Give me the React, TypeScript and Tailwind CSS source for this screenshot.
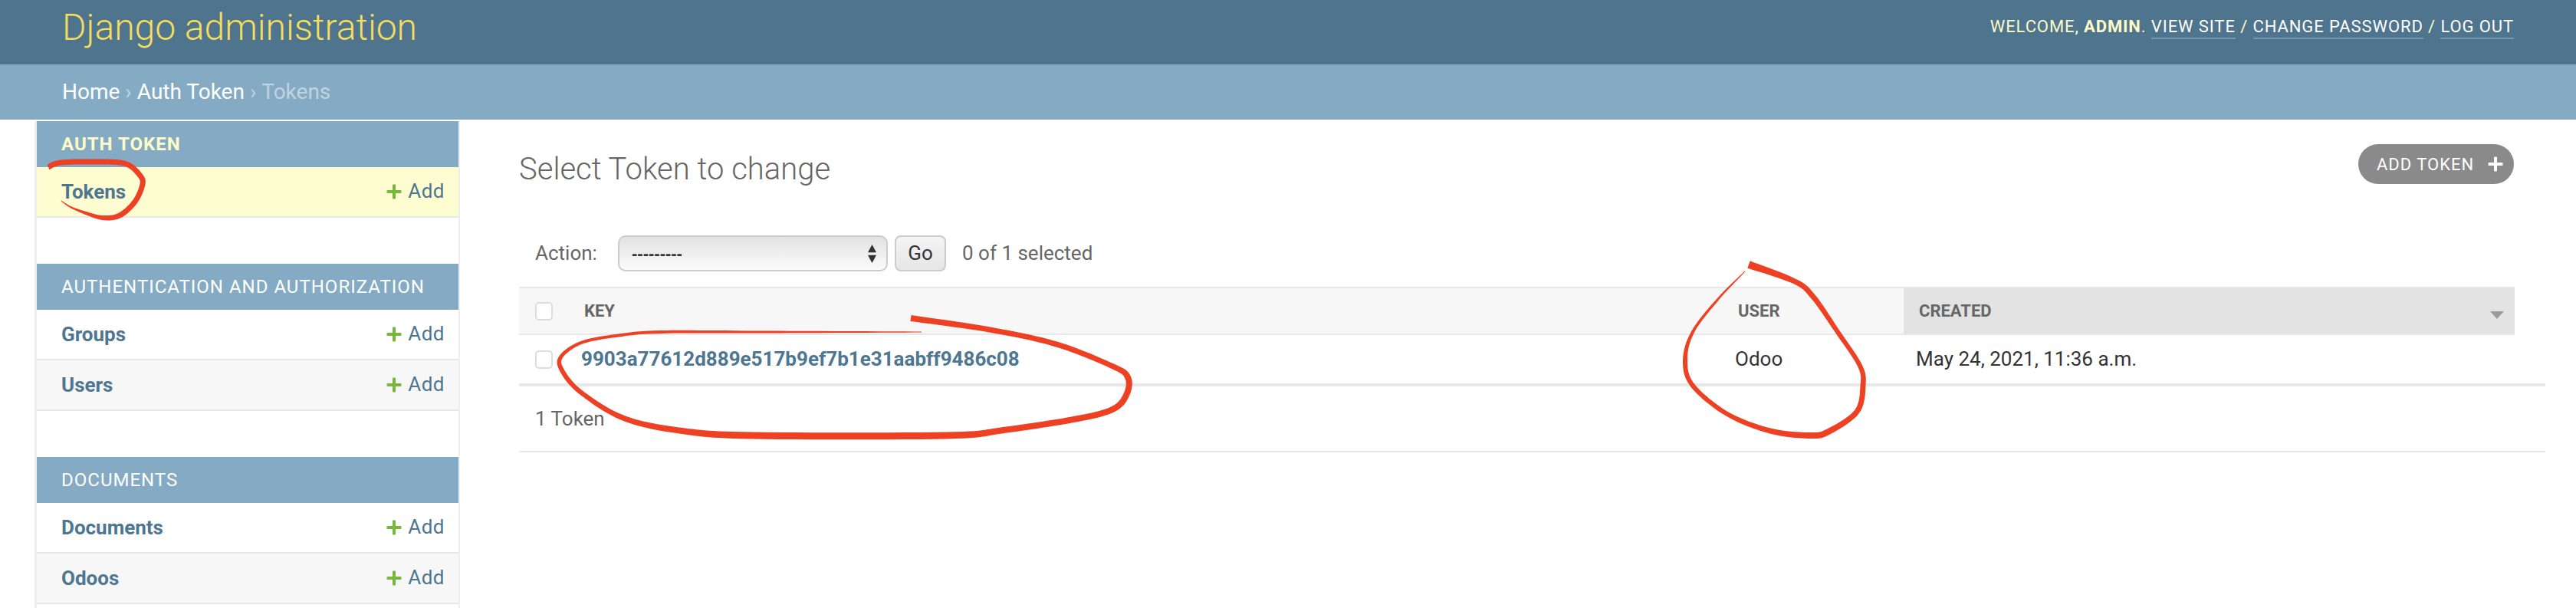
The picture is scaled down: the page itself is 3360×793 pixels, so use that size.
const blue = "text-[#4e7690]";

type Stroke = [number, number, number][];

// Hand-drawn red marks: centre line + pen width, turned into a filled outline
function brushPath(pts: Stroke) {
  const samples: [number, number, number][] = [];
  for (let i = 0; i < pts.length - 1; i++) {
    const p0 = pts[Math.max(i - 1, 0)];
    const p1 = pts[i];
    const p2 = pts[i + 1];
    const p3 = pts[Math.min(i + 2, pts.length - 1)];
    for (let s = 0; s < 12; s++) {
      const t = s / 12;
      const c = (k: number) =>
        0.5 *
        (2 * p1[k] +
          (p2[k] - p0[k]) * t +
          (2 * p0[k] - 5 * p1[k] + 4 * p2[k] - p3[k]) * t * t +
          (3 * p1[k] - p0[k] - 3 * p2[k] + p3[k]) * t * t * t);
      samples.push([c(0), c(1), p1[2] + (p2[2] - p1[2]) * t]);
    }
  }
  samples.push(pts[pts.length - 1]);
  const left: string[] = [];
  const right: string[] = [];
  samples.forEach((p, i) => {
    const a = samples[Math.max(i - 1, 0)];
    const b = samples[Math.min(i + 1, samples.length - 1)];
    const len = Math.hypot(b[0] - a[0], b[1] - a[1]) || 1;
    const nx = (-(b[1] - a[1]) / len) * (p[2] / 2);
    const ny = ((b[0] - a[0]) / len) * (p[2] / 2);
    left.push(`${(p[0] + nx).toFixed(1)} ${(p[1] + ny).toFixed(1)}`);
    right.unshift(`${(p[0] - nx).toFixed(1)} ${(p[1] - ny).toFixed(1)}`);
  });
  return `M${left.join("L")}L${right.join("L")}Z`;
}

const tokensMark: Stroke = [
  [63, 218, 7], [80, 212, 7], [134, 211, 7], [165, 214, 7], [182, 228, 7], [186, 240, 7],
  [176, 263, 7], [156, 281, 7], [134, 284, 6], [112, 278, 4], [92, 270, 2], [80, 262, 1],
];
const keyMark: Stroke = [
  [1188, 415, 8], [1291, 430, 7], [1378, 449, 7], [1452, 478, 7], [1471, 492, 8], [1470, 513, 8],
  [1453, 533, 8], [1406, 546, 8], [1309, 561, 8], [1234, 568, 9], [981, 568, 9], [890, 562, 8],
  [815, 546, 7], [758, 512, 6], [733, 483, 6], [732, 465, 5], [758, 447, 4], [803, 438, 4],
  [861, 433, 4], [1000, 433, 3], [1202, 433, 1],
];
const userMark: Stroke = [
  [2281, 345, 10], [2341, 367, 7], [2365, 387, 7], [2397, 433, 6], [2426, 477, 6], [2430, 503, 7],
  [2422, 537, 7], [2385, 563, 8], [2361, 568, 8], [2309, 562, 7], [2253, 540, 6], [2208, 503, 6],
  [2198, 470, 6], [2208, 433, 4], [2241, 390, 3], [2276, 354, 1],
];

function PlusIcon({ className }: { className: string }) {
  return (
    <svg viewBox="0 0 20 20" className={className}>
      <path
        fill="currentColor"
        d="M8 1.5a1 1 0 0 1 1-1h2a1 1 0 0 1 1 1V8h6.5a1 1 0 0 1 1 1v2a1 1 0 0 1-1 1H12v6.5a1 1 0 0 1-1 1H9a1 1 0 0 1-1-1V12H1.500a1 1 0 0 1-1-1V9a1 1 0 0 1 1-1H8z"
      />
    </svg>
  );
}

function ModelRow({ name, bg }: { name: string; bg: string }) {
  return (
    <div
      className={`flex h-[66px] items-center justify-between border-b-2 border-[#e8e8e8] pl-8 pr-[18px] text-[26px] ${blue} ${bg}`}
    >
      <span className="font-bold">{name}</span>
      <span className="flex items-center gap-[8px]">
        <PlusIcon className="h-5 w-5 text-[#76b73c]" />
        <span className="-mt-0.5 tracking-[0.5px]">Add</span>
      </span>
    </div>
  );
}

function Caption({ title, active }: { title: string; active?: boolean }) {
  return (
    <div
      className={`flex h-[60px] items-center bg-[#85abc4] pl-8 text-[24px] tracking-[1px] ${
        active ? "font-bold text-[#fdfbc8]" : "text-white"
      }`}
    >
      {title}
    </div>
  );
}

function Sidebar() {
  return (
    <div className="ml-[45px] mt-0.5 h-[635px] w-[555px] shrink-0 overflow-hidden border-l-[3px] border-r-2 border-[#eeeeee]">
      <Caption title="AUTH TOKEN" active />
      <ModelRow name="Tokens" bg="bg-[#fefdd2]" />
      <div className="mt-[60px]">
        <Caption title="AUTHENTICATION AND AUTHORIZATION" />
        <ModelRow name="Groups" bg="bg-white" />
        <ModelRow name="Users" bg="bg-[#f7f7f7]" />
      </div>
      <div className="mt-[60px]">
        <Caption title="DOCUMENTS" />
        <ModelRow name="Documents" bg="bg-white" />
        <ModelRow name="Odoos" bg="bg-[#f7f7f7]" />
      </div>
    </div>
  );
}

function Checkbox() {
  return <span className="block h-6 w-[23px] rounded-[5px] border-2 border-[#dddddd] bg-white" />;
}

function ChangeList() {
  return (
    <div className="ml-[77px] flex-1">
      <div className="flex items-start justify-between pr-[81px] pt-[32px]">
        <h1 className="mt-[9px] text-[40px] font-light leading-[48px] text-[#666666]">
          Select Token to change
        </h1>
        <a className="flex h-[52px] w-[203px] items-center gap-[18px] rounded-[26px] bg-[#8a8a8a] pl-6 text-[22px] tracking-[1px] text-white">
          ADD TOKEN
          <PlusIcon className="h-5 w-5" />
        </a>
      </div>

      <div className="mt-[62px] flex h-[47px] items-center pl-[21px] text-[26px] text-[#666666]">
        <span className="w-[108px]">Action:</span>
        <div className="relative flex h-[47px] w-[352px] items-center rounded-[10px] border-2 border-[#cccccc] bg-gradient-to-b from-[#e2e2e2] to-[#fbfbfb] pl-4 text-[#333333]">
          <span className="font-['Liberation_Sans',sans-serif] text-[22px] font-bold leading-none">---------</span>
          <svg viewBox="0 0 14 26" className="absolute right-[12px] top-[10px] h-[24px] w-[13px] text-[#333333]">
            <path fill="currentColor" d="M7 0l6 11H1zM1 15h12L7 26z" />
          </svg>
        </div>
        <button className="ml-[9px] h-[47px] w-[67px] rounded-[8px] border-2 border-[#cccccc] bg-gradient-to-b from-[#f4f4f4] to-[#e6e6e6] text-[26px] text-[#333333]">
          Go
        </button>
        <span className="ml-[21px]">0 of 1 selected</span>
      </div>

      {/* results table */}
      <div className="mr-[80px] mt-5">
        <div className="flex h-[63px] border-y-2 border-[#e8e8e8] bg-[#f7f7f7] text-[22px] font-bold text-[#666666]">
          <div className="flex w-[85px] shrink-0 items-center pl-[21px]">
            <Checkbox />
          </div>
          <div className="flex flex-1 items-center">KEY</div>
          <div className="flex w-[217px] shrink-0 items-center pl-px">USER</div>
          <div className="relative flex w-[797px] shrink-0 items-center bg-[#e3e3e3] pl-5">
            CREATED
            <svg viewBox="0 0 18 10" className="absolute right-[14px] top-[30px] h-[10px] w-[18px] text-[#9a9a9a]">
              <path fill="currentColor" d="M0 0h18L9 10z" />
            </svg>
          </div>
        </div>
        <div className="flex h-[63px] text-[26px]">
          <div className="flex w-[81px] shrink-0 items-center pl-[21px]">
            <Checkbox />
          </div>
          <a className={`flex flex-1 items-center font-bold ${blue}`}>9903a77612d889e517b9ef7b1e31aabff9486c08</a>
          <div className="flex w-[236px] shrink-0 items-center text-[#333333]">Odoo</div>
          <div className="flex w-[781px] shrink-0 items-center text-[#333333]">May 24, 2021, 11:36 a.m.</div>
        </div>
      </div>
      <div className="mr-10 flex h-[90px] items-center border-b-2 border-t-[4px] border-[#e8e8e8] pl-[21px] text-[26px] text-[#666666]">
        1 Token
      </div>
    </div>
  );
}

export default function App() {
  return (
    <div className="relative h-[793px] w-[3360px] overflow-hidden bg-white font-['Roboto',sans-serif]">
      <header className="flex h-[84px] items-start justify-between bg-[#4e748e] pl-[81px] pr-[81px]">
        <div className="pt-[6px] text-[48px] font-light leading-[60px] text-[#f5dd5d]">
          Django administration
        </div>
        <div className="flex pt-[21px] text-[22px] uppercase leading-[28px] tracking-[0.9px] text-[#fdfbc8]">
          <span>
            Welcome, <strong>admin</strong>.&nbsp;
          </span>
          <a className="border-b-2 border-white/25 text-white">View site</a>
          <span>&nbsp;/&nbsp;</span>
          <a className="border-b-2 border-white/25 text-white">Change password</a>
          <span>&nbsp;/&nbsp;</span>
          <a className="border-b-2 border-white/25 text-white">Log out</a>
        </div>
      </header>
      <nav className="flex h-[72px] items-center bg-[#85abc4] pl-[81px] text-[28px] text-white">
        Home
        <span className="mx-[7px] text-[#c0d3e2]">›</span>
        Auth Token
        <span className="mx-[7px] text-[#c0d3e2]">›</span>
        <span className="text-[#c0d3e2]">Tokens</span>
      </nav>
      <div className="flex">
        <Sidebar />
        <ChangeList />
      </div>
      {/* red marker annotations on top of the screenshot */}
      <svg className="pointer-events-none absolute left-0 top-0 h-[793px] w-[3360px]" viewBox="0 0 3360 793">
        <path fill="#ee4023" d={brushPath(tokensMark)} />
        <path fill="#ee4023" d={brushPath(keyMark)} />
        <path fill="#ee4023" d={brushPath(userMark)} />
      </svg>
    </div>
  );
}
